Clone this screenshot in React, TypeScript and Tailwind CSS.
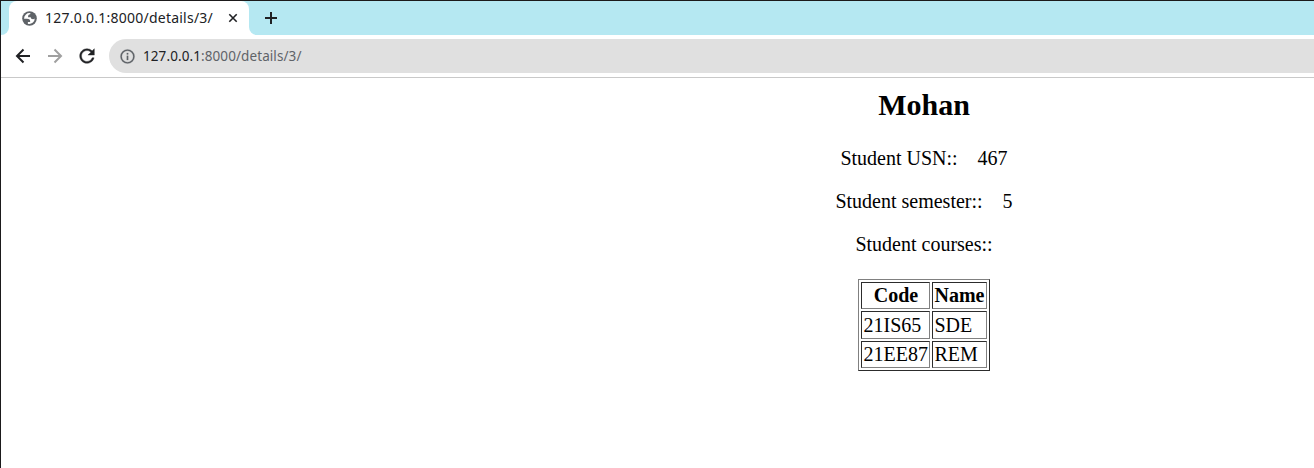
import type { ReactNode } from "react";

const courses = [
  { code: "21IS65", name: "SDE", size: "h-[28px] pt-[2px]" },
  { code: "21EE87", name: "REM", size: "h-[27px] pt-[1px]" },
];

const cell =
  "border border-t-[#2c2c2c] border-l-[#2c2c2c] border-r-[#808080] border-b-[#808080] leading-[22px]";

function Icon({ d, size, className }: { d: string; size: number; className?: string }) {
  return (
    <svg width={size} height={size} viewBox="0 0 24 24" fill="currentColor" className={className}>
      <path d={d} />
    </svg>
  );
}

function Globe() {
  return (
    <svg width="17" height="17" viewBox="0 0 24 24" className="shrink-0">
      <circle cx="12" cy="12" r="10.300" fill="#5f6368" />
      <path
        fill="#fff"
        d="M4.300 12.500h4.100c3.407.022 4.922 1.500 4.543 4.600H9.700v2.300a7.700 7.700 0 0 0 9.700-7.400C18.800 12.700 18 13 17 13c-2.137 0-3.206-.916-3.206-2.750h-3.748c-.274-2.728.683-4.092 2.870-4.092 0-.800.300-1.300.700-1.600A7.700 7.700 0 0 0 4.300 12.500z"
      />
    </svg>
  );
}

function TabStrip() {
  return (
    <div className="flex h-[34px] bg-[#b5e8f2]">
      <div className="h-full w-2 bg-white">
        <div className="h-full w-full rounded-br-[8px] bg-[#b5e8f2]" />
      </div>
      <div className="flex h-full w-[240px] items-center rounded-t-[8px] bg-white pl-[12px] text-[#202124]">
        <Globe />
        <span className="ml-[7px] w-[176px] whitespace-nowrap font-['Noto_Sans',sans-serif] text-[14px] leading-5 tracking-[0.24px]">
          127.0.0.1:8000/details/3/
        </span>
        <svg width="24" height="24" viewBox="0 0 24 24" fill="none" stroke="currentColor" strokeWidth="1.600">
          <path d="M8.300 8.300l7.400 7.400M15.700 8.300l-7.400 7.400" />
        </svg>
      </div>
      <div className="h-full w-2 bg-white">
        <div className="h-full w-full rounded-bl-[8px] bg-[#b5e8f2]" />
      </div>
      <svg className="ml-[7px] mt-[10px] text-[#202124]" width="14" height="14" viewBox="0 0 14 14" fill="none" stroke="currentColor" strokeWidth="2">
        <path d="M7 1v12M1 7h12" />
      </svg>
    </div>
  );
}

function Toolbar() {
  return (
    <div className="flex h-[43px] items-center border-b border-[#c9c9c9] bg-white pl-[12px]">
      <svg width="20" height="20" viewBox="0 0 20 20" fill="none" stroke="#202124" strokeWidth="2">
        <path d="M17 10H4.500M10.500 3.500L4 10l6.500 6.500" />
      </svg>
      <svg className="ml-3" width="20" height="20" viewBox="0 0 20 20" fill="none" stroke="#a0a0a0" strokeWidth="2">
        <path d="M3 10h12.500M9.500 3.500L16 10l-6.500 6.500" />
      </svg>
      <Icon
        size={22}
        className="ml-[11px] text-[#202124] stroke-current stroke-[0.4]"
        d="M17.650 6.350A7.958 7.958 0 0 0 12 4c-4.420 0-7.990 3.580-7.990 8s3.570 8 7.990 8c3.730 0 6.840-2.550 7.730-6h-2.080A5.990 5.990 0 0 1 12 18c-3.310 0-6-2.690-6-6s2.690-6 6-6c1.660 0 3.140.69 4.220 1.780L13 11h7V4z"
      />
      <div className="ml-[11px] flex h-[34px] grow items-center rounded-l-full bg-[#e0e0e0] pl-[10px]">
        <Icon
          size={17}
          className="text-[#5f6368] stroke-current stroke-[0.3]"
          d="M11 7h2v2h-2zm0 4h2v6h-2zm1-9a10 10 0 1 0 0 20 10 10 0 0 0 0-20zm0 18a8 8 0 1 1 0-16 8 8 0 0 1 0 16z"
        />
        <span className="ml-[7px] whitespace-nowrap font-['Noto_Sans',sans-serif] text-[13.500px] leading-5 tracking-[0.09px] text-[#5f6368]">
          <span className="text-[#202124]">127.0.0.1</span>:8000/details/3/
        </span>
      </div>
    </div>
  );
}

function Line({ children }: { children: ReactNode }) {
  return <p className="mb-[20px] h-[23px] whitespace-pre leading-[23px]">{children}</p>;
}

export default function App() {
  return (
    <div className="flex h-[468px] w-full flex-col overflow-hidden border-l border-t border-[#1b1a1b] bg-white">
      <TabStrip />
      <Toolbar />
      <main className="ml-[533px] flex w-[780px] flex-col items-center pt-[10px] font-['Liberation_Serif',serif] text-[20px] text-black">
        <h2 className="mb-[25px] h-[34px] text-[30px] font-bold leading-[34px]">Mohan</h2>
        <Line>{"Student USN::\u00a0\u00a0\u00a0 467"}</Line>
        <Line>{"Student semester::\u00a0\u00a0\u00a0 5"}</Line>
        <Line>Student courses::</Line>
        <div className="mt-[3px] grid grid-cols-[69px_55px] gap-[2px] border border-t-[#808080] border-l-[#808080] border-r-[#2c2c2c] border-b-[#2c2c2c] p-[2px]">
          <div className={`${cell} h-[27px] pl-[1px] pt-[1px] text-center font-bold`}>Code</div>
          <div className={`${cell} h-[27px] pt-[1px] text-center font-bold`}>Name</div>
          {courses.map((c) => [
            <div key={c.code} className={`${cell} ${c.size} pl-[1.500px]`}>{c.code}</div>,
            <div key={c.name} className={`${cell} ${c.size} pl-[1.500px]`}>{c.name}</div>,
          ])}
        </div>
      </main>
    </div>
  );
}
